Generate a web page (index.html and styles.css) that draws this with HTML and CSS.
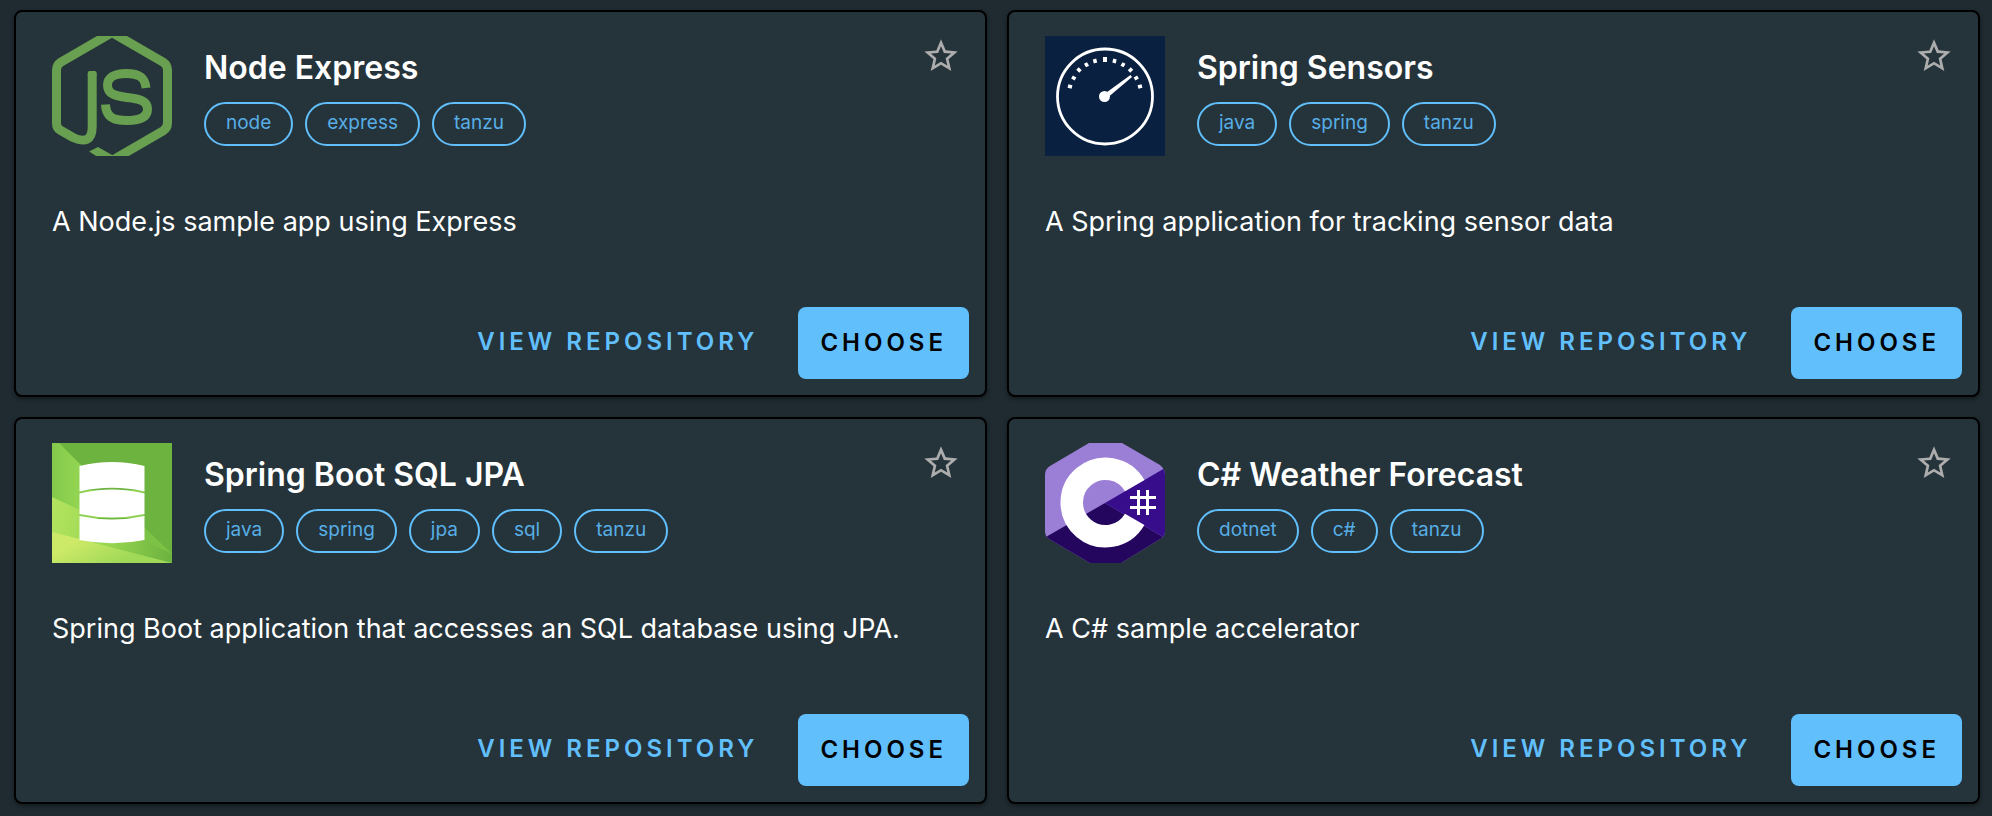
FILE: index.html
```html
<!DOCTYPE html>
<html lang="en">
<head>
<meta charset="utf-8">
<title>Accelerators</title>
<link rel="stylesheet" href="styles.css">
</head>
<body>
<svg class="defs" aria-hidden="true">
  <symbol id="star" viewBox="0 0 24 24"><path d="M22 9.24l-7.19-.62L12 2 9.19 8.63 2 9.24l5.46 4.73L5.82 21 12 17.27 18.18 21l-1.63-7.03L22 9.24zM12 15.4l-3.76 2.27 1-4.28-3.32-2.88 4.38-.38L12 6.1l1.71 4.04 4.38.38-3.32 2.88 1 4.28L12 15.4z"/></symbol>
</svg>
<main class="grid">
  <article class="card">
    <header class="head">
      <svg class="logo" viewBox="0 0 120 120" role="img" aria-label="Node.js">
        <g fill="none" stroke="#689f50" stroke-width="9">
          <path d="M60-3.500L9 26Q4.500 29 4.500 34V87Q4.500 92 8 94L21 101.500Q40 110 40.200 91V39"/>
          <path d="M60-3.500L111 26Q115.500 29 115.500 34V87Q115.500 92 111 95L60 124.500"/>
          <path d="M94 52C93 42 88 37.500 74 37.500 62 37.500 55.500 42 55.500 49 55.500 58 63 60 75 61.500 88 63 95.500 65 95.500 73 95.500 81 88 84.500 75 84.500 60 84.500 54 80 53.500 68.500"/>
        </g>
        <path fill="#689f50" d="M35.700 40V37Q35.700 35 37.700 35H42.700Q44.700 35 44.700 37V40zM61 119.500L46 111 37 115.500 45 120.500H62z"/>
      </svg>
      <div class="info">
        <h2 class="title">Node Express</h2>
        <ul class="tags"><li class="tag">node</li><li class="tag">express</li><li class="tag">tanzu</li></ul>
      </div>
      <button class="fav" type="button" aria-label="Add Node Express to favorites"><svg class="star"><use href="#star"/></svg></button>
    </header>
    <p class="desc">A Node.js sample app using Express</p>
    <footer class="actions"><a class="btn link" href="#">VIEW REPOSITORY</a><button class="btn choose" type="button">CHOOSE</button></footer>
  </article>

  <article class="card">
    <header class="head">
      <svg class="logo" viewBox="0 0 120 120" role="img" aria-label="Gauge">
        <path fill="#0a2040" d="M0 0h120v120H0z"/>
        <circle cx="60" cy="60.500" r="47.500" fill="none" stroke="#fff" stroke-width="2.800"/>
        <circle cx="59.500" cy="60.500" r="5.500" fill="#fff"/>
        <path fill="#fff" d="M58 59L85.500 39 87 41 61 63z"/>
        <path fill="#fff" d="M58 21h4v5h-4z"/>
        <path stroke="#fff" stroke-width="3.500" d="M23 50l4 1M27 41l3.500 2M32.500 32.500l3 3M40.500 27l2 3.500M49.500 23l1 4M70 23l-1 4M79 27l-2 3.500M87 32.500l-3 3M93 41l-3.500 2M97 50l-4 1"/>
      </svg>
      <div class="info">
        <h2 class="title">Spring Sensors</h2>
        <ul class="tags"><li class="tag">java</li><li class="tag">spring</li><li class="tag">tanzu</li></ul>
      </div>
      <button class="fav" type="button" aria-label="Add Spring Sensors to favorites"><svg class="star"><use href="#star"/></svg></button>
    </header>
    <p class="desc">A Spring application for tracking sensor data</p>
    <footer class="actions"><a class="btn link" href="#">VIEW REPOSITORY</a><button class="btn choose" type="button">CHOOSE</button></footer>
  </article>

  <article class="card">
    <header class="head">
      <svg class="logo" viewBox="0 0 120 120" role="img" aria-label="Database">
        <defs>
          <linearGradient id="g1" x1="0" x2="1"><stop offset="0" stop-color="#84c94b"/><stop offset="1" stop-color="#94d653"/></linearGradient>
          <linearGradient id="g2" gradientUnits="userSpaceOnUse" x1="0" x2="120" y1="70" y2="105"><stop offset="0" stop-color="#b2e35e"/><stop offset=".5" stop-color="#98d651"/><stop offset="1" stop-color="#6db33f"/></linearGradient>
          <linearGradient id="g3" gradientUnits="userSpaceOnUse" x1="30" x2="50" y1="95" y2="130"><stop offset="0" stop-color="#cde968"/><stop offset="1" stop-color="#9fd957"/></linearGradient>
        </defs>
        <path fill="#6db33f" d="M0 0h120v120H0z"/>
        <path fill="url(#g1)" d="M0 0h7l22 22v48L0 55z"/>
        <path fill="#78c043" d="M92 84l28 28v-1z"/>
        <path fill="url(#g2)" d="M0 54l28 13 64 31 28 13v9H0z"/>
        <path fill="#7cc244" d="M92 84l28 27-28-13z"/>
        <path fill="url(#g3)" d="M0 89l120 31H0z"/>
        <path fill="#8fd050" d="M27.500 47h65v5h-65zM27.500 70h65v5h-65z"/>
        <path fill="#fff" d="M27.500 23Q60 15 92.500 23V48.500Q60 41 27.500 48.500zM27.500 50.500Q60 42.500 92.500 50.500V71Q60 78 27.500 71zM27.500 73Q60 80 92.500 73V97Q60 103.500 27.500 97z"/>
      </svg>
      <div class="info">
        <h2 class="title">Spring Boot SQL JPA</h2>
        <ul class="tags"><li class="tag">java</li><li class="tag">spring</li><li class="tag">jpa</li><li class="tag">sql</li><li class="tag">tanzu</li></ul>
      </div>
      <button class="fav" type="button" aria-label="Add Spring Boot SQL JPA to favorites"><svg class="star"><use href="#star"/></svg></button>
    </header>
    <p class="desc">Spring Boot application that accesses an SQL database using JPA.</p>
    <footer class="actions"><a class="btn link" href="#">VIEW REPOSITORY</a><button class="btn choose" type="button">CHOOSE</button></footer>
  </article>

  <article class="card">
    <header class="head">
      <svg class="logo" viewBox="0 0 120 120" role="img" aria-label="C sharp">
        <clipPath id="hex"><path d="M44 0H77L115 22Q120 26 120 32V88Q120 93 116 95.500L76 120H45L4 96Q0 93 0 88V32Q0 26 5 23z"/></clipPath>
        <g clip-path="url(#hex)">
          <path fill="#9b7fd6" d="M0 0h120v120H0z"/>
          <path fill="#25065f" d="M0 94.500L60 60l60 35v25H0z"/>
          <path fill="#370d8b" d="M60 60l60-35v70z"/>
        </g>
        <path fill="none" stroke="#fff" stroke-width="22.500" d="M89.700 42.600A33.750 33.750 0 1 0 89.700 76.400"/>
        <path stroke="#fff" stroke-width="3" d="M93.500 47v25M102.500 47v25M85 54.500h26M85 64.500h26"/>
      </svg>
      <div class="info">
        <h2 class="title">C# Weather Forecast</h2>
        <ul class="tags"><li class="tag">dotnet</li><li class="tag">c#</li><li class="tag">tanzu</li></ul>
      </div>
      <button class="fav" type="button" aria-label="Add C# Weather Forecast to favorites"><svg class="star"><use href="#star"/></svg></button>
    </header>
    <p class="desc">A C# sample accelerator</p>
    <footer class="actions"><a class="btn link" href="#">VIEW REPOSITORY</a><button class="btn choose" type="button">CHOOSE</button></footer>
  </article>
</main>
</body>
</html>
```
FILE: styles.css
```css
* { box-sizing: border-box; }
body {
  margin: 0;
  background: #1f2b31;
  color: #fff;
  font-family: Inter, "Open Sans", sans-serif;
}
.defs { display: none; }
.grid {
  display: grid;
  grid-template-columns: repeat(2, minmax(0, 1fr));
  gap: 20px;
  padding: 10px 12px 12px 14px;
}
.card {
  display: flex;
  flex-direction: column;
  background: #25333a;
  border: 2px solid #000;
  border-radius: 8px;
  box-shadow: 0 2px 4px rgba(0, 0, 0, .4);
}
.head {
  display: flex;
  align-items: flex-start;
  gap: 32px;
  padding: 24px 24px 0 36px;
}
.logo { flex: none; width: 120px; height: 120px; }
.info { flex: 1; min-width: 0; padding-top: 12px; }
.title {
  margin: 0 0 14px;
  font-size: 32px;
  line-height: 40px;
  font-weight: 600;
}
.tags {
  display: flex;
  flex-wrap: wrap;
  gap: 12px;
  margin: 0;
  padding: 0;
  list-style: none;
}
.tag {
  height: 44px;
  padding: 0 20px;
  border: 2px solid #61bffc;
  border-radius: 22px;
  color: #57aee6;
  font-size: 19px;
  line-height: 38px;
}
.fav {
  padding: 0;
  border: 0;
  background: none;
  color: #adadad;
  cursor: pointer;
}
.star { display: block; width: 40px; height: 40px; fill: currentColor; }
.desc {
  min-height: 103px;
  margin: 48px 36px 0;
  font-size: 27px;
  line-height: 36px;
}
.actions {
  display: flex;
  justify-content: flex-end;
  gap: 18px;
  padding: 0 16px 16px;
}
.btn {
  height: 72px;
  padding: 0 22px;
  border: 0;
  border-radius: 8px;
  font-family: inherit;
  font-size: 24px;
  font-weight: 600;
  line-height: 70px;
  letter-spacing: 4px;
  text-decoration: none;
  cursor: pointer;
}
.link { color: #61bffc; }
.choose { background: #61bffc; color: #000; }
```
